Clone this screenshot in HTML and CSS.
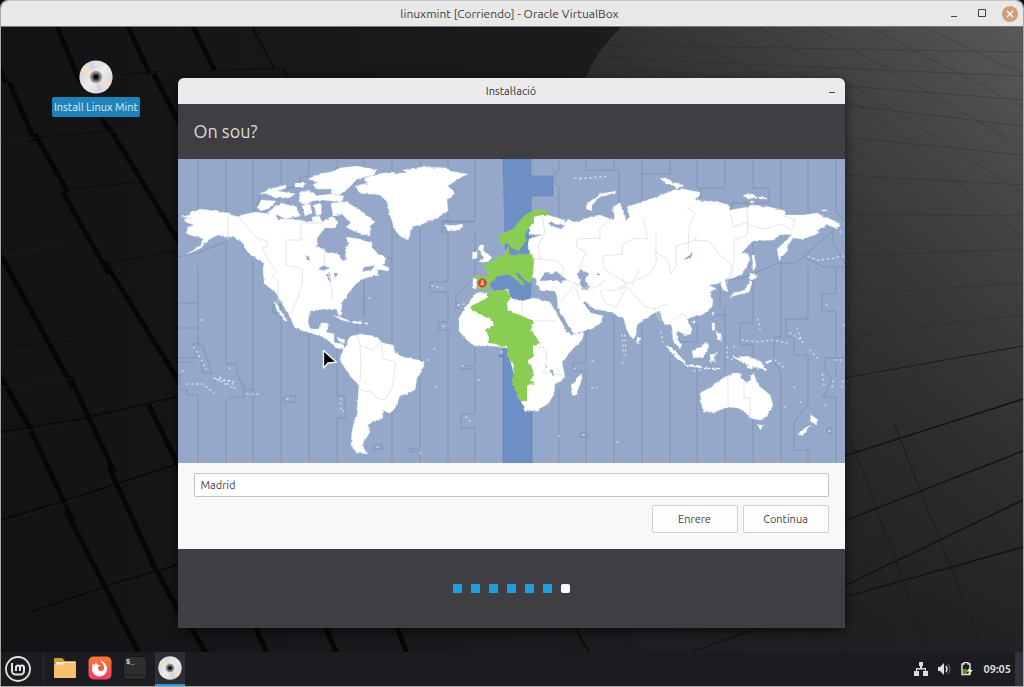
FILE: index.html
```html
<!DOCTYPE html>
<html lang="ca">
<head>
<meta charset="UTF-8" />
<meta name="viewport" content="width=device-width, initial-scale=1" />
<title>linuxmint [Corriendo] - Oracle VirtualBox</title>
<link rel="stylesheet" href="styles.css">
</head>
<body>
  <svg class="defs" width="0" height="0" aria-hidden="true">
    <defs>
      <linearGradient id="discBase" x1="0" y1="0" x2="1" y2="1">
        <stop offset="0" stop-color="#cdcdcd"/><stop offset=".5" stop-color="#ececec"/><stop offset="1" stop-color="#cacaca"/>
      </linearGradient>
      <symbol id="disc" viewBox="0 0 34 34">
        <circle cx="17" cy="17" r="16.6" fill="url(#discBase)"/>
        <path d="M17 17L2 10A16 16 0 0 1 6 5Z" fill="#f8dfc0"/>
        <path d="M17 17L6 5A16 16 0 0 1 10 2.500Z" fill="#c7ece2"/>
        <path d="M17 17L10 2.500A16 16 0 0 1 14 1Z" fill="#e5cdea"/>
        <path d="M17 17L32 23A16 16 0 0 1 28 29Z" fill="#f8dccb"/>
        <path d="M17 17L28 29A16 16 0 0 1 24 31.500Z" fill="#c9ece2"/>
        <path d="M17 17L24 31.500A16 16 0 0 1 19 33Z" fill="#e1cdea"/>
        <circle cx="17" cy="17" r="6" fill="#8d8d8d"/>
        <circle cx="17" cy="17" r="4" fill="#5c5c5c"/>
        <circle cx="17" cy="17" r="2.500" fill="#0c0c0c"/>
      </symbol>
    </defs>
  </svg>

  <div class="vm">
    <header class="vm-bar">
      <h1 class="vm-title">linuxmint [Corriendo] - Oracle VirtualBox</h1>
      <div class="vm-controls">
        <button aria-label="Minimizar"><svg width="16" height="16"><path d="M5 10.500h6" stroke="#444" stroke-width="1.200"/></svg></button>
        <button aria-label="Maximizar"><svg width="16" height="16"><path d="M4.500 3.500h7v7h-7z" fill="none" stroke="#444"/></svg></button>
        <button aria-label="Cerrar"><svg width="16" height="16"><circle cx="8" cy="8" r="8" fill="#cfa077"/><path d="M5 5l6 6M11 5l-6 6" stroke="#fff" stroke-width="1.300"/></svg></button>
      </div>
    </header>

    <main class="desktop">
      <svg class="wallpaper" viewBox="0 27 1024 625" preserveAspectRatio="none" aria-hidden="true">
        <defs>
          <linearGradient id="wallBase" x1="0" y1="0" x2="1" y2="0">
            <stop offset="0" stop-color="#121315"/><stop offset=".6" stop-color="#1b1c1e"/><stop offset="1" stop-color="#252628"/>
          </linearGradient>
          <linearGradient id="wallLight" gradientUnits="userSpaceOnUse" x1="1000" y1="30" x2="820" y2="600">
            <stop offset="0" stop-color="#57585a"/><stop offset=".35" stop-color="#414244"/><stop offset=".75" stop-color="#2b2c2e"/><stop offset="1" stop-color="#202123"/>
          </linearGradient>
          <linearGradient id="wallFade" x1="0" y1="0" x2="1" y2="0">
            <stop offset="0" stop-color="#1b1c1e" stop-opacity=".6"/><stop offset="1" stop-color="#1b1c1e" stop-opacity="0"/>
          </linearGradient>
        </defs>
        <path fill="url(#wallBase)" d="M0 27h1024v625H0z"/>
        <path fill="url(#wallLight)" d="M622 27Q592 55 582 90Q560 350 640 652H1024V27z"/>
        <path fill="url(#wallFade)" d="M622 27Q592 55 582 90Q560 350 640 652H1024V27z"/>
        <g stroke="#060607" stroke-width="5" fill="none">
          <path d="M56 26l23 56M127 26l22 48M192 26l22 44M8 82l26 59M-4 62l9 20M97 112l12 19M153 74l28 54M34 134l33 58M108 127l72 118M62 192l46 82M104 262l76 122M-2 252l74 135M69 377l45 96M148 405l32 65M108 467l46 100M-4 371l33 57M23 415l49 106M65 511l53 102M150 560l30 55M109 598l30 56M190 628l16 26M255 628l12 26M325 628l12 26M397 628l10 26"/>
        </g>
        <g stroke="#08090a" stroke-width="1.500" fill="none">
          <path d="M252 28l22 41M282 68l5 9M575 628l14 24M0 432l74-12 106-24M0 520l72-22 108-35M30 612l88-30 62-18"/>
          <path stroke="#131416" d="M845 456l179-57M845 521l179-70M845 586l179-86M692 652l157-56 175-49"/>
          <path stroke="#0c0d0e" stroke-width="1" d="M0 347l70-6M60 190l80-8M32 138l78-7M104 264l74-14M120 75l40-4M205 71l76-3"/>
        </g>
        <g stroke="#1a1b1d" stroke-width="1" fill="none">
          <path d="M845 378l179-32M800 628l45 24M850 435l80 217M895 424l90 228"/>
          <path d="M0 140l34-2M0 255l60-10M110 132l60-5M0 388l70-9M0 436l72-14M0 523l72-22"/>
        </g>
        <g stroke="#202123" stroke-width="1" fill="none" opacity=".28">
          <path d="M600 58L1024 76M605 45L1024 52M620 68L1024 100M845 105L1024 126M845 137L1024 155M845 175L1024 185M845 214L1024 216M845 256L1024 249M845 295L1024 283M845 336L1024 315"/>
          <path d="M660 27l110 50M710 27l170 90 144 120M760 27l264 165M815 27l209 120M870 27l154 80M925 27l99 47M845 140l179 170M845 200l179 220M845 265l160 245M845 330l150 240M845 395l110 240"/>
        </g>
      </svg>

      <a class="launcher" href="#">
        <svg class="launcher-icon" width="34" height="34"><use href="#disc"/></svg>
        <span class="launcher-label">Install Linux Mint</span>
      </a>

      <section class="installer">
        <div class="installer-bar">
          <span>Instal·lació</span>
          <button class="installer-min" aria-label="Minimitza"><svg width="10" height="10"><path d="M2 6.500h6" stroke="#444" stroke-width="1.200"/></svg></button>
        </div>
        <h2 class="installer-heading">On sou?</h2>

        <div class="map">
          <svg class="map-world" viewBox="178 159 667 304" role="img" aria-label="Mapa de zones horàries">
            <defs>
              <filter id="coast" x="0" y="0" width="1" height="1">
                <feTurbulence type="fractalNoise" baseFrequency=".22" numOctaves="2" seed="4" result="n"/>
                <feDisplacementMap in="SourceGraphic" in2="n" scale="3" xChannelSelector="R" yChannelSelector="G"/>
              </filter>
            </defs>
            <path fill="#95a8c9" d="M178 159h667v304H178z"/>
            <path fill="#6e90c6" stroke="#617da9" stroke-width=".6" d="M503 159h28v17h22v20h-22v95l-1 10-8 1-12-4-3-8-13 0-4-6 10-10 6-1zM503 346h5l24 50v67h-29zM499 355h4v2h-4z"/>

            <!-- time zone limits -->
            <g fill="none" stroke="#8493ae" stroke-width="1">
              <path d="M198 159v54M198 267v36h-20M178 257l22-5 28-11M178 328h20v18M178 358h18l-1-11-3-2v-1h10l10 29h-9l-3-15M178 362h17M178 375h2v15h7v5h11v68M198 303v25"/>
              <path d="M226 159v54M226 242v122h11v10l7 15v8h-14l-4 5v61M244 390h9M253 159v54M253 262v201M281 159v25M281 310v-5h-8v8h8v150M309 159v20M309 328v135M337 159v10M337 341v55h8v22h-8v45M284 396h12v6h-12z"/>
              <path d="M364 159v10M364 290v26M357 320v15M364 275v40M392 159v14M392 215v43h-5M392 258v205M420 159v8M420 225v144M420 369v80h-10v3h10v11M448 159v9M448 211v10h-6v11h6v50h-18v10h18v30h-9v8h9v133M442 222h33"/>
              <path d="M475 159v62h-33M475 232v45l-19 18v13h4M475 346v20h-14v3h14v45h-14v14h14v35M374 445h8v4h-8zM559 159v12l-4 1v12l4 2v34M531 197v15M586 159v11h28v-12M614 170h5v36M559 390v73M586 328v35h-13v8h13v92M580 433h7v4h-7zM614 315v148M642 159v42M642 174h28M642 323v140"/>
              <path d="M670 159v15M670 345v118M697 159v29h28v-29M701 188v10M697 324v18h-20M697 365v98M725 315v50M725 305v10h-9M732 209v-6h37v-15h-16v-29M720 283v25M725 363v100M753 243v20M753 280v43h-13v22h13v27M753 418v45M781 159v49M781 262v75h-7v25l7 10v91M742 278l-14 2M742 278l37-15h17l38-33"/>
              <path d="M808 159v56M808 267v52h-22v18h8v18h14v50l-14 17v28h14v13M836 159v54l9 7M833 232v10l12 22M804 257l20 10h21M836 268v26h-14v17h14v66M836 397v66M825 358h20M825 358v10l7 13-9 16h13M827 428h5v5h-5z"/>
              <path d="M253 213l9-20M281 189l19-3M300 186v-10h9"/>
            </g>

            <g filter="url(#coast)">
              <g fill="#fff" stroke="#e4eaf0" stroke-width=".4">
                <!-- north america -->
                <path d="M181 217l10-2-1-3 10-3 28 4 10 3 17-4 20 3 3 4 20 0 5 2 18 1 9-4 3 8-8 2-8 10 0 8 10 6 11 2 5 8 3-2-1-9 4-8-3-6 13 2 12 4 5 10 10 5-2 6-20 3-2 5 14-4 3 7-10 2-8 3-8 7-5 8-7 8 1 11-3 2-3-7-11 0-15 2-2 10 2 8 10 0 1-6 8 0-3 9 8 2 0 8 10 3 0 4-8-1-6-6-6-5-14-4-15-5-6-13-5-8-7-13-13-11-1-14 1-6-6-3-10-8-7-11-10-4-13-2-10 5-7 8-13 6 13-9 2-7-10-2-7-3 3-6 5-2-8-3-2-3 9-1z"/>
                <path d="M275 301l4 7 8 13-2 0-9-13z"/>
                <!-- arctic islands -->
                <path d="M258 208l3-8 15 1-6 7-9 3zM268 212l13-9 15 4 4 9-15 3-7-4-8 1zM261 193l12-5 13-3 0 3-8 3 17 3-6 4-14 0-8-4zM295 183l10 0-2 4-8 0zM300 193l9-3 8 6 13-2 14 2-2 6-20-2-10 1-6 4-7-3zM309 179l9-5 13-2 9-4 17-2 20 4-4 5-16 4-9 10-9 6-8-2 1-4-15 0-4-4 5-3z"/>
                <path d="M302 206l8-2 2 9-7 3zM314 205l7-2 1 10-5 3zM331 203l15-1 14 8 15 12-5 4 0 10-14-4-10-5 5-4-9-9-9 1zM322 223l10-7 6 5-3 7-10 0zM312 217l8-1 2 6-9 1z"/>
                <!-- greenland, iceland -->
                <path d="M355 186l13-3-5-4 7-3 13-3 24 0-4-3 20-3 24 1 3 3 17 3-12 7-7 5 7 7-8 7 1 11-11 7-17 7-7 1-5 14-8-4-5-6-5-15-3-14-7-6-20-2z"/>
                <path d="M445 225l4 0 2 1 11-2 1 3-8 4-7-1zM372 262l9 2 8 4-1 3-12-2z"/>
                <!-- caribbean -->
                <path d="M332 315l8 2 11 5-6-1-7-3zM353 321l9 1-1 2-9-1zM365 323h3v1h-3z"/>
                <!-- south america -->
                <path d="M340 360l2-9 5-6 1-7 9-4 18 2 8 7 10 2 2 8 8 4 20 4 1 5-7 12-2 12-15 6-5 12-5 5-8-3 1 8-10 3-5 5 2 6-5 8-3 6 6 8-11-1-6-8 1-14 5-20 2-26-9-9-7-11zM337 337l8 3 0 3-6-2z"/>
                <!-- europe and asia -->
                <path d="M534 215l8-1 5 1 18 5 0 5-10-1-4-3-3 3 9 4 6 0 5-9 4 2 6 1 12-5 10-2 10 4 5 1-2-13 7-4 3 9 3 8 4-3-3-10 6-2 17-6 20-7 3-2 10-1 15 3 2 3-5 5 22 2 10 2 3 6 18-3 5-2 17 2 15 4 0 4 18 0 14-2 13 6 10 5-3 4-10-3-10 5 3 3-17 6-10-1-6 9 1 3-9 10-2-11 10-9 5-6-12 1-7 5-20 1-11 11 6 2 2 6-8 14-9 4-8 2 3 12-5-2-3-7-10 2 5 4-5 3 3 8-1 7-10 8-10 2-5 2 5 10-2 5-5 2-5-4-3-1 0 8 5 6-2 4-7-9-1-13-2-3-4 1-4-5-3-9-7 3-15 11-1 10-4 4-5-9-4-13-4 0-7-5-18-3-9-8-2 2 8 10 12 3-2 7-10 6-17 5-5-7-11-20-1-5 0-9-10-1-7-1-4-6 1-5-3-3-4 2-1-8 1-21-2-3 1-8 13-4-13-1 0-7 5-6 0-9z"/>
                <path d="M586 209l2-6 12-9 17-3-2 2-15 4-8 8 1 6zM660 178l8 1 7 5-9 0zM671 184l8-1 5 3-8 2zM744 195l8-1 6 3-10 2zM760 197l7 1v1h-7zM750 202h4v1h-4zM821 210h6v1h-6z"/>
                <!-- british isles, portugal -->
                <path d="M480 245l4 0-1 5 5 5 4 3-4 4-8 0 3-4-1-3-4-5zM473 252l4-1 0 7-5 1zM473 279l4 1-1 9-3-1z"/>
                <!-- africa -->
                <path d="M465 308l7-10 5-6 10 1 21-4 2 9 12 3 11-3 17 4 17 30 5 3 12-2-2 7-15 15-5 7 3 15-10 8-1 9-6 10-11 6-12 2-3-9-15-55-15-2-17 0-8-6-8-9 0-13z"/>
                <path d="M581 374l1 4-6 17-4 0-1-10 5-5z"/>
                <!-- japan, sakhalin, taiwan, ceylon -->
                <path d="M730 298l3-5 12-3 5-10 2 3-3 9-16 4zM750 273l8 3-6 4-3-2zM752 255l2 0 2 11-3 5zM712 313l2-1-1 4zM637 337l3 1-1 5-2-1zM692 321h3v2h-3z"/>
                <!-- south east asia -->
                <path d="M666 345l4 1 8 8 7 8 0 2-8-5-6-7zM685 364l17 2 0 2-15-2zM704 368h6v1h-6zM712 368h8v1h-8zM692 351l6-2 7-6 4 2-2 6-4 7-10-1zM710 355l8-2-5 3 3 6-3-2-2 3zM712 323l3 0 0 8-3-1zM716 331l5 3 1 7-4-2zM733 355l5 3 9-2 13 5 7 9-12-3-5 2-5-6-7-3-5-3zM765 362l6-2 1 1-6 3z"/>
                <!-- oceania -->
                <path d="M700 393l13-7 10-8 10-5 9 1-2 4 8 5 5-11 5 13 12 10 3 10-6 11-7 4-10-2-5-6-7-4-10-1-16 6-9-1zM757 425l6 0-2 4zM810 414l8 6-3 5-4-4zM811 425l-9 11-4-2 9-7z"/>
              </g>
              <g fill="#8acd55">
                <path d="M545 210l-12 0-10 7-10 12-12 5-3 5 3 6 6-2 5 5 7 3 3-5 5-5-3-5 4-8 6-5-1-6 8-2 8 0z"/>
                <path d="M505 250l4-4 0 9 23-1 2 7-1 12-2 9-3 1-10-10-3 1 10 9-3 3-2-3-10-8-6 0-7 2-7 6-3 6-7 1-3-2 0-8-4-2 1-2 13 0 0-6-7-4 7-1 5-4 8-5 5-1z"/>
                <path d="M473 305l14-7 0-6 20-3 3 9-3 5 1 8 12 4 14 6-3 9 10 14-8 2 0 11-6 4 5 7 2 7-4 5 5 3-8 3 0 15-7 0-3-6-5-14 2-8-1-10-6-7 0-9-7-1-4-2-8-1 1-5-3-8 7-5 0-4-24-13z"/>
              </g>
              <g fill="#95a8c9">
                <path d="M541 281l2-8 5-1 5 2 3-3 11 9-7 2-7-2zM577 274l5-4 6 3-3 7 5 8-8 2-2-9zM532 285l5 0 4 6 14 0 0 9-15-1-7-4zM682 260l8-5 3-4-2 7z"/>
                <path d="M318 269l6-4 6 4-5 2zM327 274l3-2 1 10-3-2zM334 273l4 0-3 6zM306 255l3 2 1 5-3-3zM544 362l3 6-1 0zM549 369l4 1 1 6-2-1zM597 273h3v2h-3z"/>
              </g>
            </g>

            <!-- land borders -->
            <g fill="none" stroke="#dae1e1" stroke-width=".8">
              <path d="M228 214v26M238 216l13 15 8 9h8v7h-5l5 11 9 13-4 5 6 5v25M301 223v17h-15v25l17 4-1 14-4 15-7 15M301 223h22M325 251l-1 15M328 272l2 10 2 9v10"/>
              <path d="M357 334l3 11 12 5 9-8M360 345l1 20-1 17M381 342l2 17 13 3-2 12-2 14-7 12-8-2-6-6-11-2"/>
              <path d="M535 321h22M536 346l10 3 1 15-4 8 20 3M522 301v14M533 383l-5 2"/>
              <path d="M542 215l3 18-7 12 2 14h-8M540 259l18 2 6 8-3 9M567 280l12 6M612 218l-12 10v10l-22 1-2 8 10 5-6 15-3 6M643 218l5 21-13-1-12 6-1 10-20 2 2 13 19 12 6 3 22-11 5-10v-30M653 250l15 10 3 14 5-8 0-20 17-5 4-5M688 250l1-23 6-14-8-5M693 240l16 1 10 13 13 12-5 18M734 240v22l-3 15M734 240l13-5 1-13-15 5-2-12M748 225l-1-17M748 225l16 4 18-5 10 6 3-10-10-4M606 280l-11 8-12 0-8-6M617 288l9-3-4-6M600 290l5 13 11 4 11-20-12 3-10 0M627 287l9 10 9 10 10 2 12-5M640 270l-8 12 3 5M655 309l5 12M670 322l12-8 6 3M575 287l5 13M560 302l12-14 3-6M728 406v-32M750 418v-20h-6v-17"/>
            </g>

            <!-- small islands -->
            <g fill="none" stroke="#ccd7e6" stroke-width="1.600" stroke-linecap="round" stroke-dasharray="1 4">
              <path d="M214 378l17 3 4 7M218 380l18 2M220 377l14 12M216 379l11 6M194 347l12 22M182 371h1M187 384h16l11 9M229 368l3 2M247 394h13M201 320h1M287 399h1M341 398v13h4M443 326l4 2M434 349h1M428 360h1M435 387h1M462 366h1M478 380h1M466 417l6 6M432 286l10 2M458 305l6-1M369 298h1M377 447h5M420 453h1M592 361h1M574 369h1M592 388l5-1M559 436h1M583 435h1M617 442h1M622 335l2 20M625 335l1 20M622 363h1M661 332l2 10M501 352h1"/>
              <path d="M575 178l14 0 20-2M580 179l28-3M758 319l2 10M734 347v-4M742 340l17 2 12-2 16 3M790 333l10 6 5 6M797 328l5 14M810 350l7 8M775 360l10 8M794 387l4 3M784 407h1M800 402h1M748 365l10 4M835 360h8M824 385l-2-13M833 381l-1 8M842 387l1-8M825 405l2 2M829 431h1M808 257l10 3 12-1 13-3M840 232h1M826 305h1M843 325h1M727 347v10l8 4M700 370l-8 1"/>
            </g>

            <!-- selected city -->
            <circle cx="482.300" cy="283" r="4.200" fill="#d9433c" stroke="#b5463a" stroke-width=".6"/>
            <circle cx="482.300" cy="281.500" r="1.300" fill="#f7bfb5"/>
            <path d="M480.300 285l1-2.500h2l1 2.500z" fill="#f7bfb5"/>
            <!-- pointer -->
            <path d="M323.500 350.500v17.500l4.500-5 8.500-.8z" fill="#000" stroke="#fff" stroke-width="1.300" stroke-linejoin="round"/>
          </svg>
        </div>

        <form class="location">
          <input class="location-input" type="text" aria-label="Ubicació" value="Madrid" />
          <div class="location-buttons">
            <button type="button">Enrere</button>
            <button type="button">Continua</button>
          </div>
        </form>

        <div class="steps">
          <i></i><i></i><i></i><i></i><i></i><i></i><i class="current"></i>
        </div>
      </section>
    </main>

    <footer class="panel">
      <button class="panel-menu" aria-label="Menú">
        <svg width="28" height="28" viewBox="0 0 28 28" fill="none" stroke="#e3e3e3">
          <circle cx="14" cy="14" r="12" stroke-width="1.800"/>
          <path d="M8 8v8a3.500 3.500 0 0 0 3.500 3.500h5a3.500 3.500 0 0 0 3.500-3.500v-3.500a2 2 0 0 0-4 0V16v-3.500a2 2 0 0 0-4 0V16" stroke-width="2"/>
        </svg>
      </button>
      <nav class="panel-apps">
        <button aria-label="Fitxers">
          <svg width="24" height="24" viewBox="0 0 24 24"><path d="M1 3q0-1 1-1h7l3 3h11v6H1z" fill="#cf9a3d"/><path d="M3 6h19v6H3z" fill="#f1e9dc"/><path d="M1 8.500h9l2-1.500h11v14q0 1-1 1H2q-1 0-1-1z" fill="#f5c26b"/></svg>
        </button>
        <button aria-label="Firefox">
          <svg width="24" height="24" viewBox="0 0 24 24"><defs><linearGradient id="fox" x1="0" y1="0" x2="0" y2="1"><stop offset="0" stop-color="#fb7a35"/><stop offset="1" stop-color="#f53a62"/></linearGradient></defs><rect x=".5" y=".5" width="23" height="23" rx="5" fill="url(#fox)"/><path d="M5 7l1.500 2L8 6l1 2.500 3 .5-2 2.500q0 3.500 3 3.500 3.500 0 3-4-.3-3-4-6.500 7 2 7 8.500a7.500 7.500 0 0 1-15 0Q4 9.500 5 7z" fill="#fff"/></svg>
        </button>
        <button aria-label="Terminal">
          <svg width="24" height="24" viewBox="0 0 24 24"><rect x=".5" y=".5" width="23" height="23" rx="4" fill="#2e2e2f" stroke="#131314"/><path d="M1 19h22" stroke="#222"/><text class="prompt" x="3" y="8">$_</text></svg>
        </button>
        <button class="active" aria-label="Instal·lació">
          <svg width="24" height="24"><use href="#disc"/></svg>
        </button>
      </nav>
      <div class="tray">
        <svg width="14" height="14" viewBox="0 0 14 14" fill="#dedede"><path d="M5 0h4v4H8v2h4v3h2v5H9V9h2V7.500H3V9h2v5H0V9h2V6h4V4H5z"/></svg>
        <svg width="14" height="14" viewBox="0 0 14 14"><path d="M1 5h2l4-4v12L3 9H1z" fill="#dedede"/><path d="M9 4q2 3 0 6" fill="none" stroke="#dedede" stroke-width="1.500"/><path d="M11 2q4 5 0 10" fill="none" stroke="#77767a"/></svg>
        <svg width="14" height="14" viewBox="0 0 14 14"><path d="M4 2V.5h4V2h2v10.500H2V2z" fill="none" stroke="#dedede" stroke-width="1.500"/><path d="M3 7h4v5H3z" fill="#4e9a06"/><path d="M10 5.500L6.500 9.500H9L8 13l5-5h-3z" fill="#eee"/></svg>
        <time>09:05</time>
      </div>
      <button class="show-desktop" aria-label="Mostra l'escriptori"></button>
    </footer>
  </div>
</body>
</html>
```

FILE: styles.css
```css
* {
  box-sizing: border-box;
}
body {
  margin: 0;
  background: #0c0c0e;
  font-family: Ubuntu, "Noto Sans", "Open Sans", sans-serif;
  font-size: 11px;
  color: #444;
}
button {
  font: inherit;
  color: inherit;
  padding: 0;
  border: none;
  background: none;
}
svg {
  display: block;
}
.defs {
  position: absolute;
}
.vm {
  display: flex;
  flex-direction: column;
  min-height: 100vh;
  border: 1px solid #a8a8a8;
  border-top-color: #c4c4c4;
  border-radius: 8px 8px 0 0;
  overflow: hidden;
}
.vm-bar {
  display: grid;
  grid-template-columns: 1fr auto 1fr;
  align-items: center;
  height: 26px;
  padding-right: 5px;
  background: #e8e8e8;
  border-bottom: 1px solid #77787a;
}
.vm-title {
  grid-column: 2;
  margin: 0;
  font-size: 12px;
  line-height: 16px;
  font-weight: 400;
  color: #3c3c3c;
}
.vm-controls {
  display: flex;
  justify-content: flex-end;
  gap: 12px;
}
.desktop {
  position: relative;
  flex: 1;
  padding: 51px 22px 24px 20px;
}
.wallpaper {
  position: absolute;
  inset: 0;
  width: 100%;
  height: 100%;
}
.launcher {
  position: absolute;
  top: 33px;
  left: 51px;
  display: flex;
  flex-direction: column;
  align-items: center;
  gap: 3px;
  color: #e2eef5;
  text-decoration: none;
}
.launcher-label {
  padding: 0 2px;
  line-height: 20px;
  background: #1d83ba;
  border-radius: 2px;
}
.installer {
  position: relative;
  max-width: 667px;
  margin: 0 auto;
  background: #3f3e42;
  border-radius: 6px 6px 0 0;
  box-shadow: 0 3px 12px rgba(0, 0, 0, .6);
  overflow: hidden;
}
.installer-bar {
  position: relative;
  height: 26px;
  line-height: 26px;
  text-align: center;
  color: #303030;
  background: #ebebed;
}
.installer-min {
  position: absolute;
  top: 8px;
  right: 8px;
}
.installer-heading {
  margin: 0;
  padding: 0 16px;
  line-height: 55px;
  font-size: 18px;
  font-weight: 400;
  color: #dcdcdc;
}
.map-world {
  width: 100%;
  height: auto;
}
.location {
  display: flex;
  flex-direction: column;
  gap: 8px;
  padding: 10px 16px 16px;
  background: #f8f8f8;
}
.location-input {
  width: 100%;
  height: 24px;
  padding: 0 6px;
  font: inherit;
  color: #444;
  background: #fff;
  border: 1px solid #c4c4c4;
  border-radius: 2px;
}
.location-buttons {
  display: flex;
  justify-content: flex-end;
  gap: 5px;
}
.location-buttons button {
  width: 86px;
  height: 28px;
  background: #fdfdfd;
  border: 1px solid #d0d0d0;
  border-radius: 2px;
}
.steps {
  display: flex;
  justify-content: center;
  gap: 9px;
  padding: 35px 0;
}
.steps i {
  width: 9px;
  height: 9px;
  background: #1f9ede;
}
.steps .current {
  background: #fff;
  border-radius: 2px;
}
.panel {
  position: relative;
  display: flex;
  height: 34px;
  background: #1c1b20;
}
.panel-menu {
  width: 43px;
  padding-left: 3px;
  border-right: 1px solid #2b2a30;
}
.panel-apps {
  display: flex;
  gap: 5px;
  padding-left: 6px;
}
.panel-apps button {
  display: grid;
  place-items: center;
  width: 30px;
  border-bottom: 2px solid transparent;
}
.panel-apps .active {
  background: #2f2e35;
  border-bottom-color: #1f9ede;
}
.prompt {
  font: bold 7px "Liberation Mono", monospace;
  fill: #ddd;
}
.tray {
  display: flex;
  align-items: center;
  gap: 9px;
  margin-left: auto;
  padding-right: 4px;
  font-weight: 600;
  color: #dedede;
}
.show-desktop {
  width: 8px;
  background: #33323b;
}
```
